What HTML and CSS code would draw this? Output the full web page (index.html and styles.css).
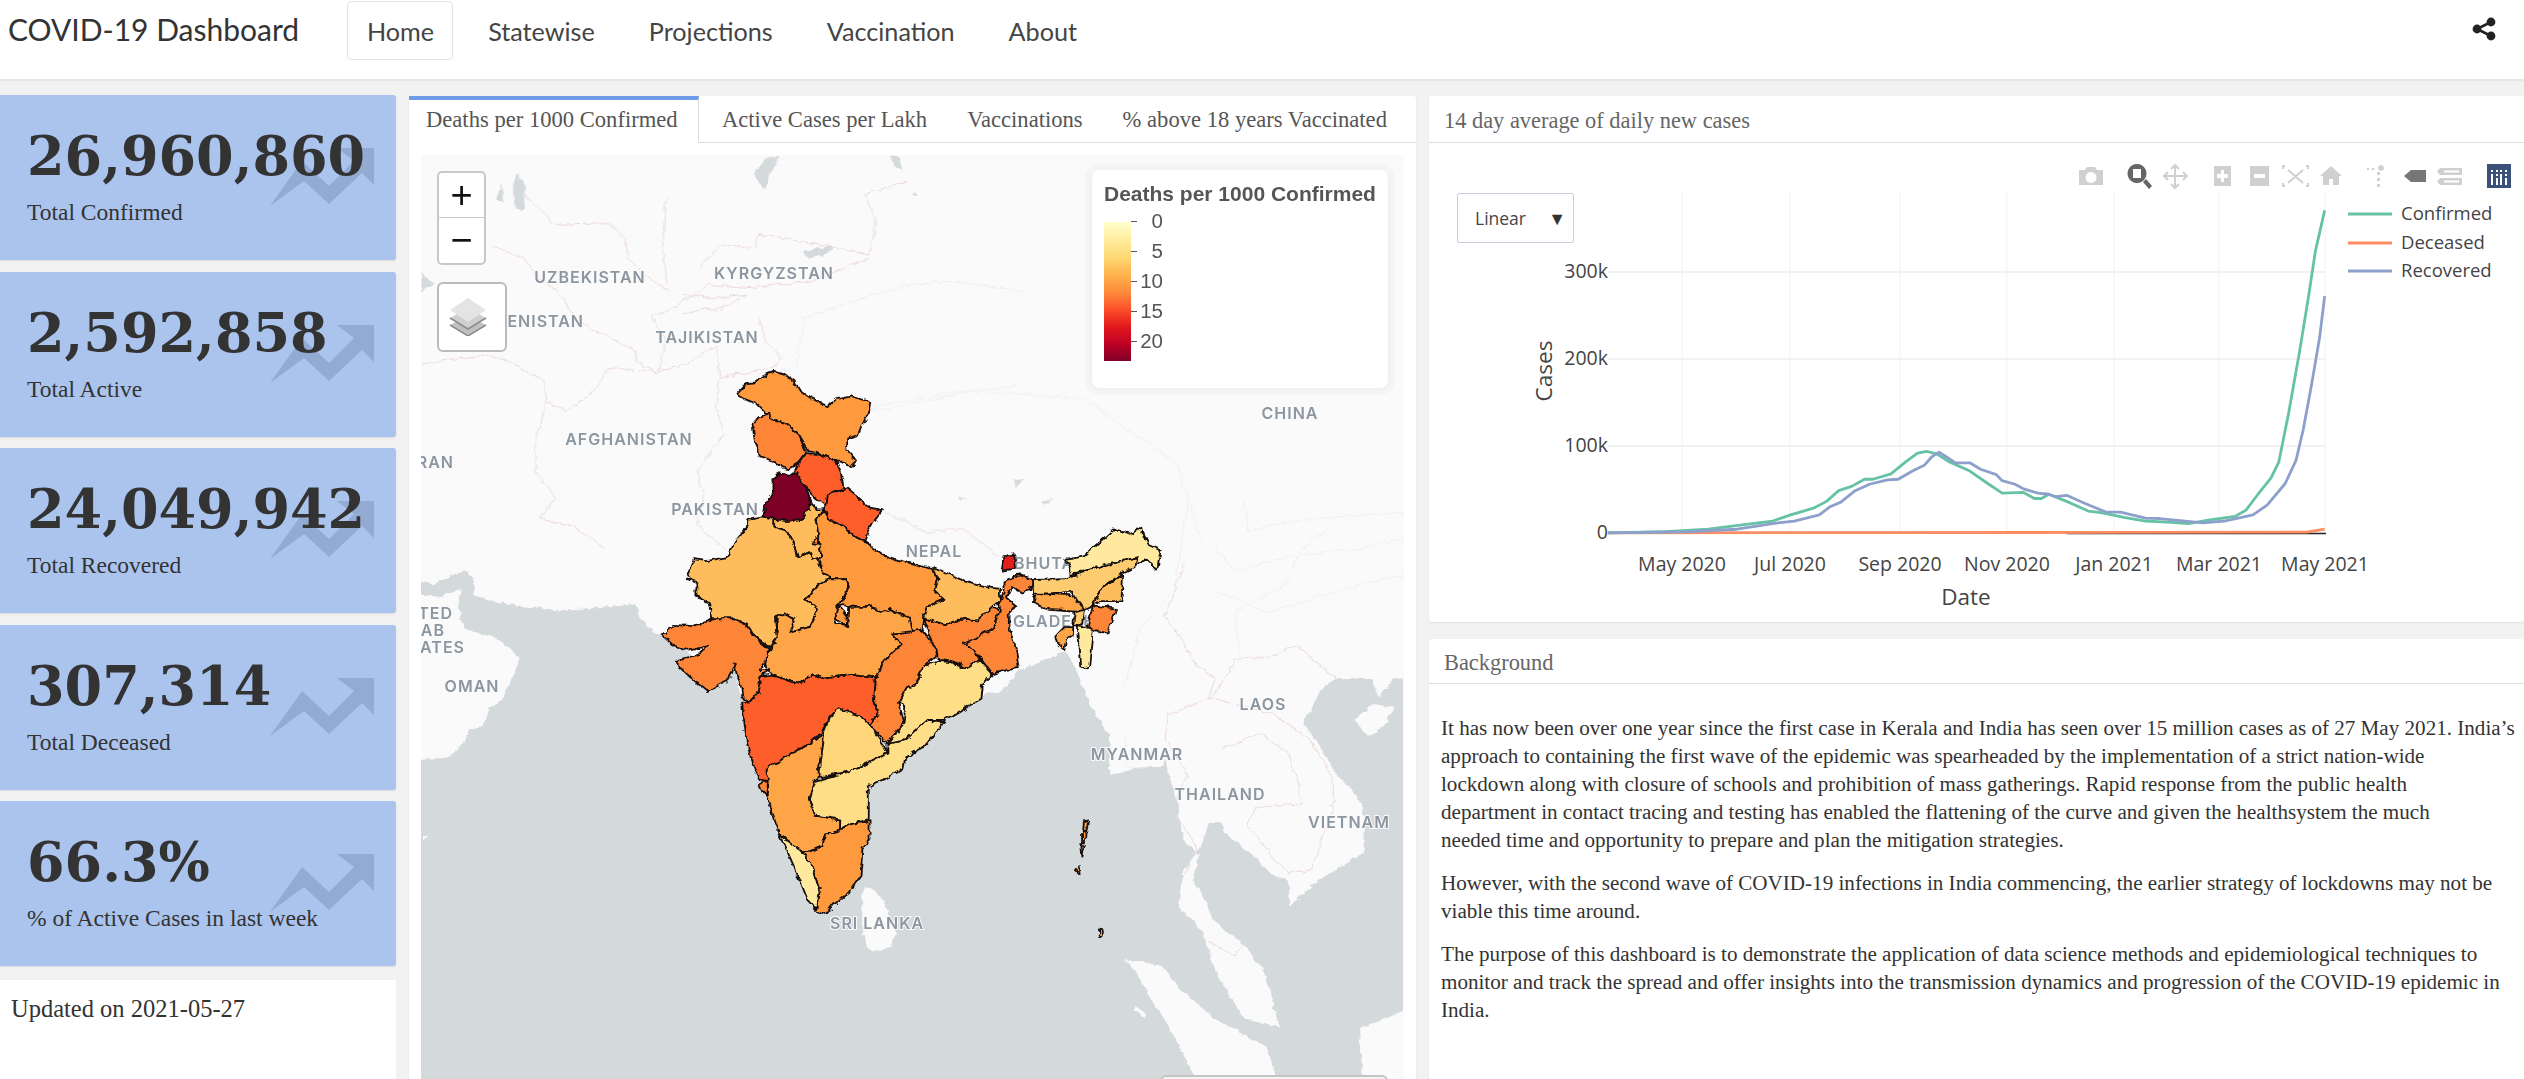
FILE: index.html
```html
<!DOCTYPE html>
<html lang="en">
<head>
<meta charset="utf-8">
<title>COVID-19 Dashboard</title>
<link rel="stylesheet" href="styles.css">
</head>
<body>
<nav class="navbar">
  <div class="brand">COVID-19 Dashboard</div>
  <ul class="nav">
    <li class="nav-item active">Home</li>
    <li class="nav-item">Statewise</li>
    <li class="nav-item">Projections</li>
    <li class="nav-item">Vaccination</li>
    <li class="nav-item">About</li>
  </ul>
  <svg class="share" viewBox="0 0 24 24"><circle cx="19" cy="5" r="4.4"/><circle cx="5" cy="12" r="4.4"/><circle cx="19" cy="19" r="4.4"/><path class="share-line" d="M19 5 5 12l14 7"/></svg>
</nav>
<main class="layout">
  <section class="col-left">
    <div class="stat"><svg class="stat-arrow" viewBox="0 0 104 58"><path d="M0 58 32 13 59 38 84 13 67 0h37v37L92 25 59 56 34 33z"/></svg><div class="stat-num">26,960,860</div><div class="stat-label">Total Confirmed</div></div>
    <div class="stat"><svg class="stat-arrow" viewBox="0 0 104 58"><path d="M0 58 32 13 59 38 84 13 67 0h37v37L92 25 59 56 34 33z"/></svg><div class="stat-num">2,592,858</div><div class="stat-label">Total Active</div></div>
    <div class="stat"><svg class="stat-arrow" viewBox="0 0 104 58"><path d="M0 58 32 13 59 38 84 13 67 0h37v37L92 25 59 56 34 33z"/></svg><div class="stat-num">24,049,942</div><div class="stat-label">Total Recovered</div></div>
    <div class="stat"><svg class="stat-arrow" viewBox="0 0 104 58"><path d="M0 58 32 13 59 38 84 13 67 0h37v37L92 25 59 56 34 33z"/></svg><div class="stat-num">307,314</div><div class="stat-label">Total Deceased</div></div>
    <div class="stat"><svg class="stat-arrow" viewBox="0 0 104 58"><path d="M0 58 32 13 59 38 84 13 67 0h37v37L92 25 59 56 34 33z"/></svg><div class="stat-num">66.3%</div><div class="stat-label">% of Active Cases in last week</div></div>
    <div class="updated">Updated on 2021-05-27</div>
  </section>

  <section class="col-map panel">
    <div class="tabs">
      <div class="tab tab-active">Deaths per 1000 Confirmed</div>
      <div class="tab tab-second">Active Cases per Lakh</div>
      <div class="tab">Vaccinations</div>
      <div class="tab">% above 18 years Vaccinated</div>
    </div>
    <div class="map">
      <svg class="map-svg" viewBox="421 155 982 924">
        <defs>
          <filter id="rough" filterUnits="userSpaceOnUse" x="421" y="155" width="982" height="924">
            <feTurbulence type="turbulence" baseFrequency=".09" numOctaves="2" seed="4" result="noise"/>
            <feDisplacementMap in="SourceGraphic" in2="noise" scale="5" xChannelSelector="R" yChannelSelector="G"/>
          </filter>
        </defs>
        <g class="rough">
        <polygon class="sea" points="421,580 433,583 453,573 465,570 472,577 473,593 487,599 520,605 553,609 593,607 633,602 640,617 653,632 660,635 670,640 700,660 720,680 733,660 738,690 745,700 760,760 850,720 1000,690 1019,669 1040,660 1065,650 1074,669 1090,704 1108,734 1108,774 1140,765 1161,765 1163,758 1177,806 1182,840 1197,851 1182,869 1177,906 1200,928 1217,976 1243,1017 1278,1026 1263,969 1243,945 1213,921 1200,891 1193,880 1197,851 1207,821 1220,821 1223,832 1253,855 1270,873 1288,880 1288,904 1320,877 1363,851 1362,803 1333,770 1303,722 1320,688 1337,677 1370,677 1377,696 1393,677 1410,676 1410,1090 410,1090 410,580"/>
        <polygon class="land" points="410,593 443,595 460,587 457,603 463,627 480,632 500,640 520,658 510,677 503,697 487,707 483,723 467,730 460,747 443,757 410,758"/>
        <polygon class="land" points="421,835 428,836 421,840"/>
        <polygon class="land" points="863,885 870,887 883,900 896,933 888,947 873,950 865,947 860,917"/>
        <polygon class="land" points="1124,958 1160,965 1177,987 1213,1017 1267,1047 1277,1090 1200,1090 1173,1035 1140,980"/>
        <polygon class="land" points="1358,1028 1377,1019 1410,1006 1410,1090 1363,1090"/>
        <polygon class="land" points="1353,718 1373,703 1393,707 1383,725 1367,736"/>
        <polygon class="land" points="1133,1005 1145,1012 1143,1016 1132,1009"/>
        <g transform="translate(420 150) scale(.3827 .3333)">
          <polygon class="lake" points="250,70 272,100 268,175 245,175 238,100"/>
          <polygon class="lake" points="210,100 192,145 215,150"/>
          <polygon class="lake" points="900,20 935,15 895,115 868,70"/>
          <polygon class="lake" points="995,300 1078,285 1060,310 1015,322"/>
          <polygon class="lake" points="1225,15 1250,20 1256,60 1235,42"/>
          <polygon class="lake" points="0,365 32,400 0,420"/>
          <polygon class="lake" points="1290,122 1300,132 1280,130"/>
          <polyline class="border" points="185,285 270,320 300,380 360,420 390,480 440,530 560,600 560,635 620,665"/>
          <polyline class="border" points="270,130 350,220 490,215 530,260 540,320 590,380 650,420"/>
          <polyline class="border" points="640,140 630,280 640,400"/>
          <polyline class="border" points="730,350 780,280 870,290 880,250 960,265 1060,285 1170,310 1190,220 1160,130 1270,90"/>
          <polyline class="border" points="600,495 660,470 750,400 860,410 1020,390 1170,320"/>
          <polyline class="border" points="680,490 740,470 770,480 850,430 760,440 690,430"/>
          <polyline class="border" points="600,495 640,560 620,660 690,640 770,585 780,680 920,650 940,620 900,570 880,500"/>
          <polyline class="border" points="620,665 490,650 450,720 380,780 325,750 320,690 230,630 170,610 0,640"/>
          <polyline class="border" points="325,750 300,870 300,960 350,1040 310,1100 400,1130 480,1190"/>
          <polyline class="border" points="780,680 770,770 790,850 720,960 740,1040 720,1120 800,1200"/>
          <polyline class="border-soft" points="880,670 980,650 1000,500 1180,430 1280,400 1400,390 1568,420"/>
          <polyline class="border-soft" points="1150,780 1230,770 1440,720 1568,700"/>
        </g>
        <g transform="translate(1000 500) scale(.3333 .3693)">
          <polyline class="border" points="500,580 630,530 680,470 700,430 810,420 890,390 950,440 1010,480"/>
          <polyline class="border" points="550,170 490,310 560,400 580,440 640,480 620,530"/>
          <polyline class="border" points="500,570 490,640 560,740 510,830 590,940 550,1010"/>
          <polyline class="border" points="660,670 780,630 860,680 890,760 900,820 760,830 740,880 860,1010 930,1000 960,920 1000,820 990,740 920,640 820,580 750,560 630,530"/>
          <polyline class="border" points="620,1190 700,1230 725,1205"/>
          <polyline class="border-soft" points="640,240 800,300 950,260 1100,220 1210,200"/>
          <polyline class="border-soft" points="720,430 700,300 850,230 900,130 1000,60"/>
          <polyline class="border-soft" points="370,500 420,340 520,240 560,0"/>
          <polyline class="border-soft" points="730,0 740,80 900,50 1208,30"/>
          <polyline class="border-soft" points="640,120 700,190 860,150 1060,130 1208,100"/>
          <polyline class="border-soft" points="370,630 380,720 440,720"/>
        </g>
        <g transform="translate(640 340) scale(.35714 .38265)">
          <polyline class="border" points="680,445 800,500 900,490 1000,560"/>
          <polyline class="border-soft" points="640,170 900,130 1240,150 1500,320 1568,520"/>
          <polygon class="lake" points="1120,420 1155,408 1130,430"/>
          <polygon class="lake" points="1040,360 1070,362 1050,382"/>
          <polygon class="lake" points="885,405 910,408 890,415"/>
        </g>
        </g>
        <text class="place" x="590" y="283" text-anchor="middle">UZBEKISTAN</text>
        <text class="place" x="774" y="279" text-anchor="middle">KYRGYZSTAN</text>
        <text class="place" x="584" y="327" text-anchor="end">TURKMENISTAN</text>
        <text class="place" x="707" y="343" text-anchor="middle">TAJIKISTAN</text>
        <text class="place" x="629" y="445" text-anchor="middle">AFGHANISTAN</text>
        <text class="place" x="454" y="468" text-anchor="end">IRAN</text>
        <text class="place" x="715" y="515" text-anchor="middle">PAKISTAN</text>
        <text class="place" x="1290" y="419" text-anchor="middle">CHINA</text>
        <text class="place" x="934" y="557" text-anchor="middle">NEPAL</text>
        <text class="place" x="1014" y="569">BHUTAN</text>
        <text class="place" x="1036" y="627" text-anchor="middle">BANGLADESH</text>
        <text class="place" x="1137" y="760" text-anchor="middle">MYANMAR</text>
        <text class="place" x="1263" y="710" text-anchor="middle">LAOS</text>
        <text class="place" x="1220" y="800" text-anchor="middle">THAILAND</text>
        <text class="place" x="1349" y="828" text-anchor="middle">VIETNAM</text>
        <text class="place" x="877" y="929" text-anchor="middle">SRI LANKA</text>
        <text class="place" x="472" y="692" text-anchor="middle">OMAN</text>
        <text class="place" x="453" y="619" text-anchor="end">UNITED</text>
        <text class="place" x="445" y="636" text-anchor="end">ARAB</text>
        <text class="place" x="465" y="653" text-anchor="end">EMIRATES</text>
        <g class="rough">
        <g class="india" transform="translate(640 340) scale(.35714 .38265)">
          <polygon class="s-orange" points="268,137 295,110 318,108 340,93 375,78 400,85 430,105 445,128 470,145 505,162 525,170 545,150 590,142 642,158 637,195 615,220 605,245 577,255 578,285 605,315 585,330 570,315 545,315 525,305 490,290 465,285 440,245 405,215 370,205 345,185 318,160 290,150"/>
          <polygon class="s-deep" points="312,215 325,200 360,190 370,205 405,215 440,245 460,290 430,325 410,335 370,315 330,300 318,260"/>
          <polygon class="s-hot" points="460,290 490,295 525,305 548,318 560,345 568,390 540,395 520,430 490,410 465,385 425,345 435,325"/>
          <polygon class="s-mid" points="475,425 490,440 510,440 490,470 500,530 505,565 480,572 472,550 440,565 425,525 405,495 370,485 370,465 405,470 450,465"/>
          <polygon class="s-deep" points="490,512 500,520 497,530 478,528"/>
          <polygon class="s-mid" points="300,465 340,458 370,465 370,485 405,495 425,525 440,565 472,550 480,572 505,565 510,605 530,620 490,640 460,675 495,700 470,745 420,760 415,735 430,725 400,712 375,725 380,775 360,800 320,775 295,740 260,725 200,725 190,685 155,665 155,630 128,620 150,570 180,575 240,565 265,520 300,480"/>
          <polygon class="s-orange" points="510,440 525,465 560,480 600,510 625,522 680,560 730,575 810,592 830,625 820,650 848,675 800,695 790,725 785,755 760,765 750,725 700,700 675,710 640,695 600,695 565,690 545,700 540,725 575,745 580,720 555,690 585,640 575,620 530,620 510,605 495,570 505,565 500,530 490,470"/>
          <polygon class="s-light-orange" points="380,720 400,712 430,725 415,760 470,745 495,700 460,675 490,640 530,620 575,620 582,640 550,695 540,725 545,740 578,745 580,695 600,695 640,695 675,710 700,700 750,725 760,763 705,765 730,790 705,810 680,835 655,880 590,870 510,880 480,870 445,895 370,872 350,860 345,840 365,800 380,775"/>
          <polygon class="s-deep" points="60,770 90,742 150,745 200,725 260,725 295,740 320,775 360,805 345,840 330,860 360,860 335,875 328,915 300,945 285,935 280,900 270,880 262,840 255,865 240,890 185,915 140,880 105,850 100,835 155,820 185,795 120,810 90,795"/>
          <polygon class="s-hot" points="280,945 300,945 328,915 335,875 370,872 445,895 480,870 510,880 590,870 655,880 650,940 665,975 640,1005 615,980 550,960 525,985 505,1025 475,1050 420,1075 385,1100 355,1110 355,1150 330,1145 310,1100 290,1020"/>
          <polygon class="s-deep" points="330,1155 352,1150 352,1190 342,1180"/>
          <polygon class="s-light-orange" points="355,1110 385,1100 420,1075 475,1050 510,1030 497,1140 485,1150 470,1195 485,1240 555,1250 555,1280 515,1290 505,1320 470,1335 450,1335 385,1285 375,1260 352,1190 355,1150"/>
          <polygon class="s-yellow" points="550,960 615,980 640,1005 680,1055 690,1075 630,1105 580,1125 505,1140 497,1130 510,1030 525,985"/>
          <polygon class="s-pale" points="690,1050 740,1040 800,990 850,995 790,1060 740,1090 735,1115 680,1145 635,1165 635,1250 590,1262 555,1280 555,1250 485,1240 470,1195 485,1150 580,1125 630,1105 690,1075"/>
          <polygon class="s-orange" points="640,1255 640,1300 620,1330 615,1395 580,1440 540,1470 515,1500 490,1490 498,1430 480,1370 450,1335 470,1335 505,1320 515,1290 555,1280 590,1262"/>
          <polygon class="s-cream" points="385,1285 450,1335 480,1370 498,1430 490,1485 465,1460 430,1380"/>
          <polygon class="s-deep" points="705,765 785,755 815,790 830,820 790,850 770,895 740,910 720,945 735,1000 690,1050 640,1005 665,975 650,940 655,880 680,835 705,810 730,790"/>
          <polygon class="s-pale" points="790,850 830,835 870,840 905,855 945,830 985,870 955,895 950,935 850,990 800,990 740,1040 690,1050 735,1000 740,955 720,945 740,910 770,895"/>
          <polygon class="s-deep" points="790,725 850,740 900,725 940,730 985,695 1005,705 985,750 950,770 905,790 950,830 910,855 870,840 830,830 830,820 815,790"/>
          <polygon class="s-mid" points="815,590 850,605 900,625 960,640 1005,645 1005,680 985,695 940,730 900,725 850,740 790,725 800,695 848,675 820,650 830,625"/>
          <polygon class="s-deep" points="1015,628 1060,610 1098,625 1090,652 1065,657 1038,640 1022,670 1035,680 1052,692 1030,705 1030,750 1045,780 1058,855 1020,860 985,870 950,830 905,790 950,770 985,750 1005,705 1000,690 1015,660"/>
          <polygon class="s-red" points="1015,562 1045,557 1050,595 1010,600"/>
          <polygon class="s-soft" points="1098,622 1190,620 1280,590 1390,565 1385,590 1350,605 1285,650 1265,690 1240,700 1235,740 1210,745 1215,700 1210,655 1130,660 1098,685"/>
          <polygon class="s-cream" points="1185,570 1240,560 1290,520 1325,490 1365,505 1400,490 1420,530 1455,545 1445,600 1415,570 1385,590 1390,565 1280,590 1205,612 1205,590"/>
          <polygon class="s-mid" points="1350,610 1345,680 1285,680 1265,690 1285,650"/>
          <polygon class="s-deep" points="1265,690 1330,700 1305,765 1250,750"/>
          <polygon class="s-light-orange" points="1098,685 1105,660 1130,660 1210,665 1238,700 1220,705 1140,700"/>
          <polygon class="s-cream" points="1220,745 1265,755 1255,850 1240,855 1230,850"/>
          <polygon class="s-light-orange" points="1160,770 1185,745 1210,745 1210,765 1190,780 1185,808 1165,790"/>
          <polygon class="s-light-orange" points="1240,1255 1252,1253 1247,1280 1238,1280"/>
          <polygon class="s-orange" points="1235,1285 1245,1282 1243,1310 1235,1310"/>
          <polygon class="s-light-orange" points="1230,1315 1240,1318 1233,1345"/>
          <polygon class="s-light-orange" points="1215,1380 1225,1370 1228,1392"/>
          <polygon class="s-light-orange" points="1282,1538 1293,1540 1293,1555 1285,1560"/>
          <polygon class="s-dark" points="385,345 415,350 435,345 470,400 475,425 450,465 405,470 340,458 345,430 368,395 368,360"/>
          <polygon class="s-hot" points="520,400 550,395 575,385 610,410 640,435 675,442 650,470 635,495 625,522 600,510 560,480 525,465 515,440"/>
        </g>
        </g>
      </svg>
      <div class="zoom-ctrl"><div class="zoom-btn">+</div><div class="zoom-btn">−</div></div>
      <div class="layers-ctrl">
        <svg class="layers-icon" viewBox="0 0 36 38"><path class="layer-c" d="M18 18 36 27 18 38 0 27z"/><path class="layer-line" d="M0 27 18 38 36 27"/><path class="layer-b" d="M18 10 36 20 18 31 0 20z"/><path class="layer-line" d="M0 20 18 31 36 20"/><path class="layer-a" d="M18 0 36 12 18 24 0 12z"/></svg>
      </div>
      <div class="legend">
        <div class="legend-title">Deaths per 1000 Confirmed</div>
        <div class="legend-body">
          <div class="colorbar"></div>
          <div class="legend-ticks">
            <div class="legend-tick">0</div><div class="legend-tick">5</div><div class="legend-tick">10</div><div class="legend-tick">15</div><div class="legend-tick">20</div>
          </div>
        </div>
      </div>
      <div class="attribution"></div>
    </div>
  </section>

  <section class="col-right">
    <div class="panel chart-panel">
      <div class="panel-head">14 day average of daily new cases</div>
      <div class="chart">
        <svg class="chart-svg" viewBox="1429 143 1095 478">
          <g class="grid">
            <path d="M1682 192V533M1790 192V533M1900 192V533M2007 192V533M2114 192V533M2219 192V533M2325 192V533"/>
            <path class="grid-h" d="M1608 272H2326M1608 359H2326M1608 446H2326"/>
          </g>
          <g transform="translate(1400 80) scale(.7168 .3571)">
            <polyline class="line-black" points="930,1270 1292,1270"/>
            <polyline class="line-deceased" points="290,1268 1000,1267 1265,1266 1290,1258"/>
            <polyline class="line-confirmed" points="290,1268 370,1265 430,1258 480,1245 520,1235 545,1218 578,1198 595,1180 612,1150 630,1138 648,1118 660,1118 685,1103 705,1070 722,1045 735,1040 750,1048 765,1068 795,1095 820,1130 840,1157 870,1155 885,1172 895,1172 905,1160 930,1180 960,1207 980,1212 1010,1225 1040,1235 1070,1238 1100,1242 1130,1232 1165,1222 1180,1205 1197,1160 1215,1115 1226,1070 1240,930 1255,760 1268,600 1277,480 1290,365"/>
            <polyline class="line-recovered" points="290,1268 400,1265 470,1258 520,1242 550,1235 585,1218 600,1195 615,1182 635,1150 655,1132 680,1120 695,1118 715,1095 732,1078 742,1055 752,1042 762,1055 775,1072 795,1072 810,1090 832,1105 840,1122 858,1132 870,1145 890,1157 905,1160 915,1167 930,1163 955,1185 985,1210 1005,1210 1040,1227 1060,1228 1120,1240 1150,1235 1190,1218 1210,1190 1235,1130 1250,1065 1260,980 1272,850 1283,720 1290,605"/>
          </g>
          <g class="tick">
            <text x="1608" y="278" text-anchor="end">300k</text>
            <text x="1608" y="365" text-anchor="end">200k</text>
            <text x="1608" y="452" text-anchor="end">100k</text>
            <text x="1608" y="539" text-anchor="end">0</text>
            <text x="1682" y="571" text-anchor="middle">May 2020</text>
            <text x="1790" y="571" text-anchor="middle">Jul 2020</text>
            <text x="1900" y="571" text-anchor="middle">Sep 2020</text>
            <text x="2007" y="571" text-anchor="middle">Nov 2020</text>
            <text x="2114" y="571" text-anchor="middle">Jan 2021</text>
            <text x="2219" y="571" text-anchor="middle">Mar 2021</text>
            <text x="2325" y="571" text-anchor="middle">May 2021</text>
          </g>
          <text class="axis-title" x="1966" y="605" text-anchor="middle">Date</text>
          <text class="axis-title" transform="translate(1552 371) rotate(-90)" text-anchor="middle">Cases</text>
          <path class="leg-confirmed" d="M2348 214H2392"/>
          <path class="leg-deceased" d="M2348 243H2392"/>
          <path class="leg-recovered" d="M2348 271H2392"/>
          <g class="legend-text">
            <text x="2401" y="220">Confirmed</text>
            <text x="2401" y="249">Deceased</text>
            <text x="2401" y="277">Recovered</text>
          </g>
          <g class="mode">
            <path d="M2079 170h6l2-3h8l2 3h6v15h-24zM2091 172a5.5 5.5 0 1 0 .01 0z"/>
            <path d="M2214 166h17v20h-17zM2221 170v4h-4v4h4v4h3v-4h4v-4h-4v-4z" fill-rule="evenodd"/>
            <path d="M2250 166h19v20h-19zM2254 174v4h11v-4z" fill-rule="evenodd"/>
            <path d="M2331 166l-11 10h3v9h6v-6h4v6h6v-9h3z"/>
            <path d="M2440 168h22v7h-22l-3-3.500zM2440 178h22v7h-22l-3-3.500zM2444 170.500v2h15v-2zM2444 180.500v2h15v-2z" fill-rule="evenodd"/>
            <path d="M2381 165a3 3 0 1 0 .01 0zM2377 172h3v3h-3zM2377 178h3v3h-3zM2377 184h3v3h-3zM2367 168h2v2h-2zM2372 168h2v2h-2z"/>
          </g>
          <g class="mode-stroke">
            <path d="M2175 165v23M2164 176h23M2171 169l4-4 4 4M2171 184l4 4 4-4M2168 172l-4 4 4 4M2183 172l4 4-4 4"/>
            <path d="M2285 166h-2v3M2306 166h2v3M2285 186h-2v-3M2306 186h2v-3M2288 170l15 13M2303 170l-15 13"/>
          </g>
          <path class="mode-active" d="M2137 164a9.500 9.500 0 1 0 .01 0zM2133 169h8v9h-8zM2143 182l3-3 6 7-3 3z" fill-rule="evenodd"/>
          <path class="mode-dark" d="M2404 176l7-6h15v12h-15z"/>
          <rect class="logo-box" x="2487" y="164" width="24" height="24"/>
          <path class="logo-mark" d="M2491 174h2v11h-2zM2496 178h2v7h-2zM2500 174h2v11h-2zM2505 178h2v7h-2zM2491 170h2v2h-2zM2496 170h2v2h-2zM2500 170h2v2h-2zM2505 170h2v2h-2zM2496 174h2v2h-2zM2505 174h2v2h-2z"/>
        </svg>
        <div class="select"><span>Linear</span><span class="select-arrow">▼</span></div>
      </div>
    </div>
    <div class="panel bg-panel">
      <div class="panel-head">Background</div>
      <div class="bg-body">
        <p>It has now been over one year since the first case in Kerala and India has seen over 15 million cases as of 27 May 2021. India’s<br>approach to containing the first wave of the epidemic was spearheaded by the implementation of a strict nation-wide<br>lockdown along with closure of schools and prohibition of mass gatherings. Rapid response from the public health<br>department in contact tracing and testing has enabled the flattening of the curve and given the healthsystem the much<br>needed time and opportunity to prepare and plan the mitigation strategies.</p>
        <p>However, with the second wave of COVID-19 infections in India commencing, the earlier strategy of lockdowns may not be<br>viable this time around.</p>
        <p>The purpose of this dashboard is to demonstrate the application of data science methods and epidemiological techniques to<br>monitor and track the spread and offer insights into the transmission dynamics and progression of the COVID-19 epidemic in<br>India.</p>
      </div>
    </div>
  </section>
</main>
</body>
</html>
```

FILE: styles.css
```css
* { box-sizing: border-box; }
html, body { margin: 0; padding: 0; }
body {
  width: 2524px;
  height: 1079px;
  overflow: hidden;
  background: #f2f2f2;
  font-family: "Liberation Serif", serif;
  color: #333;
}
.navbar {
  height: 81px;
  background: #fff;
  border-bottom: 2px solid #e7e7e7;
  display: flex;
  align-items: flex-start;
  padding-left: 8px;
  font-family: Lato, sans-serif;
}
.brand {
  font-size: 30px;
  line-height: 59px;
  color: #333;
  width: 339px;
  font-weight: 400;
}
.nav {
  list-style: none;
  display: flex;
  margin: 1px 0 0;
  padding: 0;
  flex: 1;
}
.nav-item {
  height: 59px;
  line-height: 59px;
  font-size: 25.200px;
  color: #444;
  padding: 0 18px 0 19px;
  margin-right: 15px;
  border: 1px solid transparent;
  border-radius: 4px;
}
.active { border-color: #e3e3e3; }
.share { width: 24px; height: 24px; margin: 17px 28px 0 0; fill: #222; }
.share-line { fill: none; stroke: #222; stroke-width: 2.6; }
.layout {
  display: grid;
  grid-template-columns: 396px 1007px 1fr;
  column-gap: 13px;
  padding-top: 14px;
  height: 998px;
}
.col-left { display: flex; flex-direction: column; gap: 11.5px; height: 984px; }
.stat {
  position: relative;
  height: 165px;
  flex: none;
  background: #abc4ee;
  border-radius: 0 3px 3px 0;
  box-shadow: 0 1px 2px rgba(0, 0, 0, .1);
  padding: 31px 0 0 27px;
  overflow: hidden;
}
.stat-arrow {
  position: absolute;
  left: 270px;
  top: 53px;
  width: 104px;
  height: 58px;
  fill: rgba(40, 60, 90, .18);
}
.stat-num {
  position: relative;
  font-family: "DejaVu Serif", serif;
  font-size: 54px;
  line-height: 60px;
  font-weight: 700;
  color: #333;
  white-space: nowrap;
}
.stat-label {
  position: relative;
  font-size: 23.500px;
  line-height: 30px;
  margin-top: 11px;
  color: #333;
}
.updated {
  flex: 1;
  margin-top: 2px;
  background: #fff;
  padding: 14px 11px;
  font-size: 24.500px;
  line-height: 30px;
  color: #333;
}
.panel { background: #fff; border-radius: 3px; box-shadow: 0 1px 2px rgba(0, 0, 0, .08); }
.col-map { height: 984px; margin-top: 1px; }
.tabs {
  display: flex;
  height: 47px;
  border-bottom: 1px solid #ddd;
}
.tab {
  font-size: 22.600px;
  line-height: 47px;
  color: #555;
  padding: 0 20px;
  white-space: nowrap;
}
.tab-active {
  width: 290px;
  height: 47px;
  padding: 0 0 0 17px;
  border-top: 4px solid #6f9cea;
  border-right: 1px solid #ddd;
  background: #fff;
  line-height: 40px;
}
.tab-second { margin-left: 3px; }
.map { position: relative; margin: 12px 12px 0; height: 924px; overflow: hidden; background: #fafafa; }
.map-svg { display: block; width: 982px; height: 924px; }
.rough { filter: url(#rough); }
.sea { fill: #d4d9dc; }
.land { fill: #fafafa; }
.lake { fill: #d4d9dc; }
.border, .border-soft { fill: none; vector-effect: non-scaling-stroke; stroke-width: 1; }
.border { stroke: #ecd9d9; }
.border-soft { stroke: #efefef; }
.place {
  font-family: Inter, sans-serif;
  font-size: 16px;
  font-weight: 600;
  letter-spacing: 1px;
  fill: #8c96a0;
  stroke: #fbfbfb;
  stroke-width: 2px;
  paint-order: stroke;
}
.india polygon { stroke: #151010; stroke-width: 1.8px; stroke-linejoin: round; vector-effect: non-scaling-stroke; }
.s-dark { fill: #7f0028; }
.s-red { fill: #e31a1c; }
.s-hot { fill: #fe5f2c; }
.s-deep { fill: #fd8538; }
.s-orange { fill: #fe9a3e; }
.s-light-orange { fill: #fea547; }
.s-mid { fill: #febc5c; }
.s-soft { fill: #fecc6f; }
.s-yellow { fill: #fed679; }
.s-pale { fill: #fede86; }
.s-cream { fill: #ffe99e; }
.zoom-ctrl {
  position: absolute;
  left: 16px;
  top: 16px;
  width: 49px;
  height: 94px;
  background: #fff;
  border: 2px solid rgba(0, 0, 0, .2);
  border-radius: 5px;
  background-clip: padding-box;
}
.zoom-btn {
  height: 45px;
  text-align: center;
  font-family: "Liberation Sans", sans-serif;
  font-size: 38px;
  font-weight: 400;
  line-height: 44px;
  color: #111;
}
.zoom-btn:first-child { border-bottom: 1px solid #ccc; }
.layers-ctrl {
  position: absolute;
  left: 16px;
  top: 127px;
  width: 70px;
  height: 70px;
  background: #fff;
  border: 2px solid rgba(0, 0, 0, .25);
  border-radius: 6px;
  background-clip: padding-box;
  display: flex;
  align-items: center;
  justify-content: center;
}
.layers-icon { width: 40px; height: 38px; display: block; margin-right: 8px; }
.layer-a { fill: #e4e4e4; }
.layer-b { fill: #cfcfcf; }
.layer-c { fill: #c0c0c0; }
.layer-line { fill: none; stroke: #8c8c8c; stroke-width: 1.5; }
.legend {
  position: absolute;
  left: 671px;
  top: 15px;
  width: 296px;
  height: 218px;
  padding: 12px 12px;
  background: rgba(255, 255, 255, .92);
  border-radius: 8px;
  box-shadow: 0 0 0 7px rgba(225, 225, 225, .2), 0 0 10px rgba(0, 0, 0, .05);
  font-family: "Liberation Sans", sans-serif;
  color: #555;
}
.legend-title { font-size: 21px; font-weight: 700; line-height: 24px; white-space: nowrap; }
.legend-body { display: flex; margin-top: 15px; }
.colorbar {
  width: 27px;
  height: 139px;
  margin-top: 1px;
  background: linear-gradient(#ffffcc, #ffeda0 12%, #fed976 25%, #feb24c 38%, #fd8d3c 50%, #fc4e2a 63%, #e31a1c 75%, #bd0026 88%, #800026);
}
.legend-ticks { width: 32px; margin-top: -15px; }
.legend-tick {
  position: relative;
  height: 30px;
  line-height: 30px;
  font-size: 20.500px;
  text-align: right;
}
.legend-tick::before {
  content: "";
  position: absolute;
  left: 0;
  top: 15px;
  width: 6px;
  height: 1px;
  background: #555;
}
.attribution {
  position: absolute;
  left: 739px;
  top: 920px;
  width: 228px;
  height: 10px;
  border: 2px solid rgba(150, 150, 150, .5);
  border-radius: 6px 6px 0 0;
  background: #f4f4f4;
}
.col-right { display: flex; flex-direction: column; gap: 17px; margin-top: 1px; height: 984px; }
.chart-panel { height: 526px; }
.panel-head {
  height: 47px;
  line-height: 50px;
  padding-left: 15px;
  font-size: 22.400px;
  color: #666;
  border-bottom: 1px solid #ddd;
}
.chart { position: relative; }
.chart-svg { display: block; width: 1095px; height: 478px; }
.grid path { stroke: #f3f3f3; stroke-width: 1; fill: none; }
.grid .grid-h { stroke: #eeeeee; stroke-width: 1.5; }
.chart-svg polyline { fill: none; stroke-width: 2.8px; vector-effect: non-scaling-stroke; stroke-linejoin: round; }
.line-confirmed { stroke: #66c2a5; }
.line-recovered { stroke: #8da0cb; }
.line-deceased { stroke: #fc8d62; }
.line-black { stroke: #222; stroke-width: 1.5px !important; }
.leg-confirmed, .leg-deceased, .leg-recovered { fill: none; stroke-width: 3px; }
.leg-confirmed { stroke: #66c2a5; }
.leg-deceased { stroke: #fc8d62; }
.leg-recovered { stroke: #8da0cb; }
.tick text { font-family: "Open Sans", sans-serif; font-size: 19.500px; fill: #444; }
.legend-text text { font-family: "Open Sans", sans-serif; font-size: 18.500px; fill: #444; }
.axis-title { font-family: "Open Sans", sans-serif; font-size: 22.500px; fill: #444; }
.mode { fill: #d0d0d0; }
.mode-stroke { fill: none; stroke: #d0d0d0; stroke-width: 2; }
.mode-active { fill: #666; }
.mode-dark { fill: #777; }
.logo-box { fill: #3b5177; }
.logo-mark { fill: #fff; }
.select {
  position: absolute;
  left: 28px;
  top: 50px;
  width: 117px;
  height: 50px;
  background: #fff;
  border: 1px solid #ccd;
  border-radius: 2px;
  display: flex;
  align-items: center;
  justify-content: space-between;
  padding: 0 7px 0 17px;
  font-family: "Open Sans", sans-serif;
  font-size: 17.500px;
  color: #444;
}
.select-arrow { font-size: 18px; color: #333; }
.bg-panel { flex: 1; }
.bg-panel .panel-head { height: 45px; line-height: 47px; }
.bg-body {
  padding: 30px 5px 0 12px;
  font-size: 21.100px;
  line-height: 28px;
  color: #333;
  white-space: nowrap;
}
.bg-body p { margin: 0 0 15px; }
```
